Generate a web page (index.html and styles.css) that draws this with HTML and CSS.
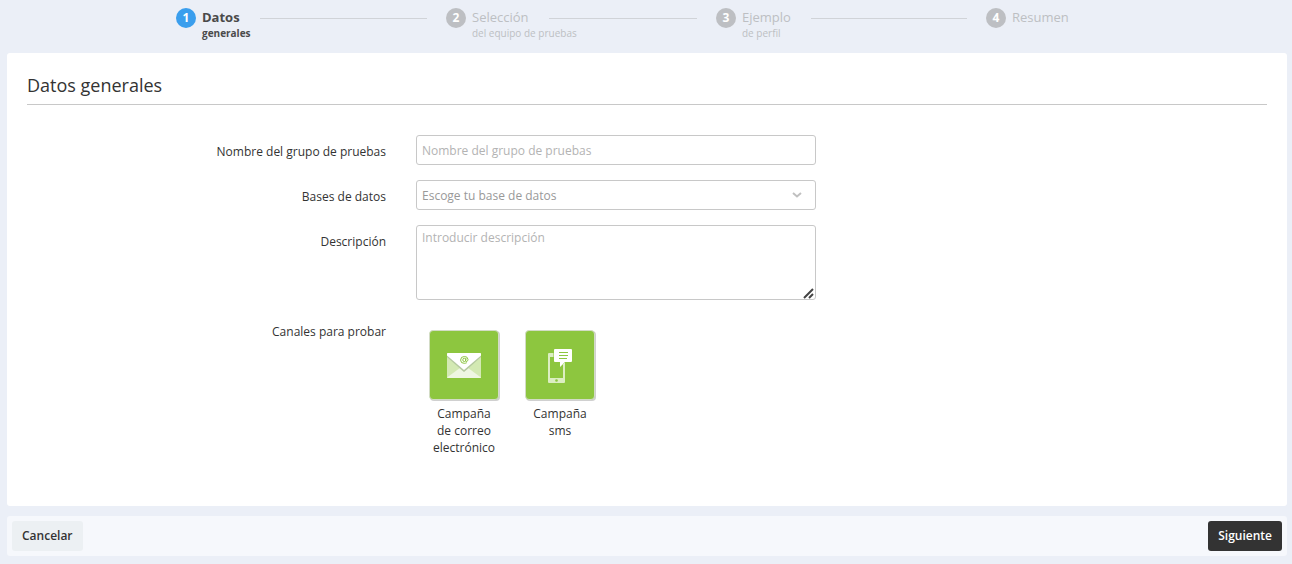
FILE: index.html
```html
<!DOCTYPE html>
<html lang="es">
<head>
<meta charset="utf-8">
<meta name="viewport" content="width=device-width, initial-scale=1">
<title>Datos generales</title>
<link rel="stylesheet" href="styles.css">
</head>
<body>
<ol class="steps">
  <li class="step step-active">
    <span class="step-number">1</span>
    <span class="step-title">Datos</span>
    <span class="step-line"></span>
    <span class="step-sub">generales</span>
  </li>
  <li class="step">
    <span class="step-number">2</span>
    <span class="step-title">Selección</span>
    <span class="step-line"></span>
    <span class="step-sub">del equipo de pruebas</span>
  </li>
  <li class="step">
    <span class="step-number">3</span>
    <span class="step-title">Ejemplo</span>
    <span class="step-line"></span>
    <span class="step-sub">de perfil</span>
  </li>
  <li class="step">
    <span class="step-number">4</span>
    <span class="step-title">Resumen</span>
  </li>
</ol>

<main class="card">
  <h1 class="card-title">Datos generales</h1>
  <form class="form" id="group-form">
    <label class="label" for="name">Nombre del grupo de pruebas</label>
    <input class="field input" id="name" type="text" placeholder="Nombre del grupo de pruebas">

    <label class="label" for="database">Bases de datos</label>
    <div class="select-wrap">
      <select class="field select" id="database">
        <option>Escoge tu base de datos</option>
      </select>
      <svg class="chevron" viewBox="0 0 10 6" aria-hidden="true"><path d="M1 1l4 3.4L9 1"/></svg>
    </div>

    <label class="label" for="description">Descripción</label>
    <div class="textarea-wrap">
      <textarea class="field textarea" id="description" placeholder="Introducir descripción"></textarea>
      <svg class="grip" viewBox="0 0 11 11" aria-hidden="true"><path d="M1 10l9-9M6 10l4-4"/></svg>
    </div>

    <span class="label" id="channels-label">Canales para probar</span>
    <div class="channels" role="group" aria-labelledby="channels-label">
      <button class="channel" type="button">
        <span class="tile">
          <svg class="icon" viewBox="1 1 68 68" aria-hidden="true">
            <rect x="18" y="23" width="34" height="25" rx="1" fill="#d3e9b3"/>
            <path d="M18 47.500L35 35l17 12.500q-.5.500-1 .5H19q-.5 0-1-.5z" fill="#eef6e2"/>
            <path d="M18 25l17 14 17-14v2L38 39.500l-3 2.500-3-2.500L18 27z" fill="#b5c9a0"/>
            <path d="M18 25.500V24q0-1 1-1h32q1 0 1 1v1.500L35 40z" fill="#fff"/>
            <g fill="none" stroke="#8dc63f" stroke-width="1">
              <ellipse cx="35.300" cy="29.900" rx="1.500" ry="1.700"/>
              <path d="M37 28.100l-.4 2.500q.2 1.200 1.200.9 1.200-.5 1.200-2.100a3.500 3.200 0 0 0-3.600-2.900 3.700 3.600 0 0 0-3.800 3.600 3.500 3.300 0 0 0 3.700 3.200q1.400 0 2.500-.6"/>
            </g>
          </svg>
        </span>
        <span class="channel-name">Campaña de correo electrónico</span>
      </button>
      <button class="channel" type="button">
        <span class="tile">
          <svg class="icon" viewBox="1 1 68 68" aria-hidden="true">
            <path d="M23 24q0-1 1-1h15q1 0 1 1v28q0 1-1 1H24q-1 0-1-1zm2 3v21h13V27z" fill="#dceec2" fill-rule="evenodd"/>
            <circle cx="31.500" cy="50.500" r="1.300" fill="#8dc63f"/>
            <path d="M30 19h16q1 0 1 1v11q0 1-1 1h-6l-5 5v-5h-5q-1 0-1-1V20q0-1 1-1z" fill="#fff" stroke="#8dc63f" stroke-width="1" paint-order="stroke"/>
            <path d="M34 22.500h9M34 25.500h9M34 28.500h8" stroke="#8dc63f" stroke-width="1"/>
          </svg>
        </span>
        <span class="channel-name">Campaña sms</span>
      </button>
    </div>
  </form>
</main>

<footer class="actions">
  <button class="button button-cancel" type="button">Cancelar</button>
  <button class="button button-next" type="submit" form="group-form">Siguiente</button>
</footer>
</body>
</html>
```

FILE: styles.css
```css
* {
  box-sizing: border-box;
}

body {
  margin: 0;
  padding: 8px 5px 8px 7px;
  background: #ebeff7;
  color: #333;
  font: 12px/17px "Open Sans", "Noto Sans", sans-serif;
}

button,
input,
select,
textarea {
  font: inherit;
  color: inherit;
}

.steps {
  display: grid;
  grid-template-columns: repeat(3, 270px) 130px;
  justify-content: center;
  margin: 0;
  padding: 0 2px 0 0;
  min-height: 45px;
  list-style: none;
  color: #bdbfc3;
}

.step {
  display: grid;
  grid-template-columns: 20px auto 1fr;
  grid-template-rows: 20px 10px;
  column-gap: 6px;
  align-content: start;
}

.step-number {
  border-radius: 50%;
  background: #bdbfc3;
  color: #fff;
  font-size: 12px;
  font-weight: 700;
  line-height: 20px;
  text-align: center;
}

.step-title {
  font-size: 13px;
  line-height: 18px;
}

.step-line {
  align-self: center;
  height: 1px;
  margin: 0 19px 0 14px;
  background: #d0d3d8;
}

.step-sub {
  grid-column: 2 / -1;
  grid-row: 2;
  font-size: 10px;
  line-height: 10px;
}

.step-active {
  color: #4a4a4a;
  font-weight: 700;
}

.step-active .step-number {
  background: #3a9eed;
}

.card {
  padding: 20px 20px 50px;
  border-radius: 3px;
  background: #fff;
}

.card-title {
  margin: 0 0 30px;
  padding-bottom: 6px;
  border-bottom: 1px solid #c8c8c8;
  font-size: 18px;
  font-weight: 400;
  line-height: 25px;
}

.form {
  display: grid;
  grid-template-columns: minmax(0, 359px) minmax(0, 400px);
  gap: 15px 30px;
}

.label {
  padding-top: 8px;
  text-align: right;
}

.field {
  display: block;
  width: 100%;
  height: 30px;
  padding: 0 5px;
  border: 1px solid #c8c8c8;
  border-radius: 3px;
  background: #fff;
}

.field::placeholder {
  color: #b3b3b3;
  opacity: 1;
}

.select-wrap,
.textarea-wrap {
  position: relative;
}

.select {
  appearance: none;
  color: #999;
}

.chevron {
  position: absolute;
  top: 12px;
  right: 14px;
  width: 10px;
  height: 6px;
  fill: none;
  stroke: #c0c0c0;
  stroke-width: 2;
  pointer-events: none;
}

.textarea {
  height: 75px;
  padding: 3px 5px;
  resize: vertical;
}

.textarea::-webkit-resizer {
  background: transparent;
}

.grip {
  position: absolute;
  right: 2px;
  bottom: 1px;
  width: 11px;
  height: 11px;
  fill: none;
  stroke: #444;
  stroke-width: 2;
  pointer-events: none;
}

.channels {
  display: flex;
  gap: 16px;
  padding-top: 15px;
  padding-left: 8px;
}

.channel {
  display: flex;
  flex-direction: column;
  align-items: center;
  gap: 5px;
  width: 80px;
  padding: 0;
  border: 0;
  background: none;
  text-align: center;
}

.tile {
  width: 70px;
  height: 70px;
  border: 1px solid #d3dcc6;
  border-radius: 4px;
  background: #8dc63f;
  box-shadow: 1px 1px 0 #d0d0d0;
}

.icon {
  display: block;
  width: 100%;
  height: 100%;
}

.channel-name {
  width: 70px;
}

.actions {
  display: flex;
  justify-content: space-between;
  margin-top: 10px;
  padding: 5px;
  border-radius: 3px;
  background: #f6f8fc;
}

.button {
  height: 30px;
  padding: 0 10px 2px;
  border: 0;
  border-radius: 3px;
  font-weight: 600;
}

.button-cancel {
  background: #ecf0f3;
}

.button-next {
  background: #333;
  color: #fff;
}
```
